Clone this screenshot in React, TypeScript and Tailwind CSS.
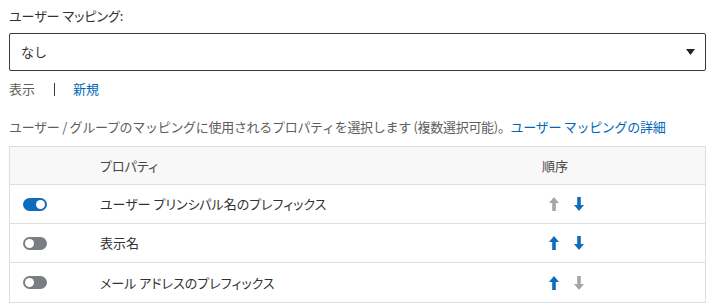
import React from "react";

const font = { fontFamily: '"Noto Sans CJK JP", "Noto Sans", sans-serif' };

function Toggle({ on }: { on: boolean }) {
  return (
    <div
      className={`w-[24px] h-[13px] rounded-full flex items-center px-[2px] ${
        on ? "bg-[#0f6cbd] justify-end" : "bg-[#7a7e84] justify-start"
      }`}
    >
      <div className="w-[9px] h-[9px] rounded-full bg-white" />
    </div>
  );
}

function Arrow({ dir, active }: { dir: "up" | "down"; active: boolean }) {
  const color = active ? "#0f6cbd" : "#a6a6a6";
  return (
    <svg width="10" height="14" viewBox="0 0 10 14" className="block">
      {dir === "up" ? (
        <path d="M5 0 L10 6 L6.8 6 L6.8 14 L3.2 14 L3.2 6 L0 6 Z" fill={color} />
      ) : (
        <path d="M5 14 L10 8 L6.8 8 L6.8 0 L3.2 0 L3.2 8 L0 8 Z" fill={color} />
      )}
    </svg>
  );
}

const rows = [
  { on: true, name: "ユーザー プリンシパル名のプレフィックス", up: false, down: true },
  { on: false, name: "表示名", up: true, down: true },
  { on: false, name: "メール アドレスのプレフィックス", up: true, down: false },
];

export default function App() {
  return (
    <div className="w-[712px] h-[308px] bg-white pl-[9px] pr-[6px] text-[13px] text-[#323130]" style={font}>
      <div className="h-[33px] pt-[6px] leading-[20px] [font-feature-settings:'palt']">ユーザー マッピング:</div>
      <div className="h-[38px] border border-[#323a45] rounded-[2px] flex items-center justify-between pl-[11px] pr-[10px]">
        <span>なし</span>
        <svg width="9" height="6" viewBox="0 0 9 6">
          <path d="M0 0 L9 0 L4.5 6 Z" fill="#222" />
        </svg>
      </div>
      <div className="flex items-center h-[36px] text-[#605e5c]">
        <span>表示</span>
        <span className="ml-[19px] w-px h-[13px] bg-[#3b3a39]" />
        <span className="ml-[18px] text-[#0067b8]">新規</span>
      </div>
      <div className="h-[39px] flex items-center text-[#605e5c] tracking-[-0.3px]">
        <span>
          ユーザー / グループのマッピングに使用されるプロパティを選択します (複数選択可能)。
          <span className="text-[#0067b8]">ユーザー マッピングの詳細</span>
        </span>
      </div>
      <div className="border border-[#dedede] [font-feature-settings:'palt']">
        <div className="flex items-center h-[38px] bg-[#f8f8f9] border-b border-[#dedede] text-[#484644]">
          <div className="w-[90px]" />
          <div className="flex-1">プロパティ</div>
          <div className="w-[163px]">順序</div>
        </div>
        {rows.map((r, i) => (
          <div
            key={i}
            className={`flex items-center h-[39px] ${i < rows.length - 1 ? "border-b border-[#dedede]" : ""}`}
          >
            <div className="w-[90px] pl-[13px]">
              <Toggle on={r.on} />
            </div>
            <div className="flex-1">{r.name}</div>
            <div className="w-[163px] flex items-center gap-[15px] pl-[7px]">
              <Arrow dir="up" active={r.up} />
              <Arrow dir="down" active={r.down} />
            </div>
          </div>
        ))}
      </div>
    </div>
  );
}
